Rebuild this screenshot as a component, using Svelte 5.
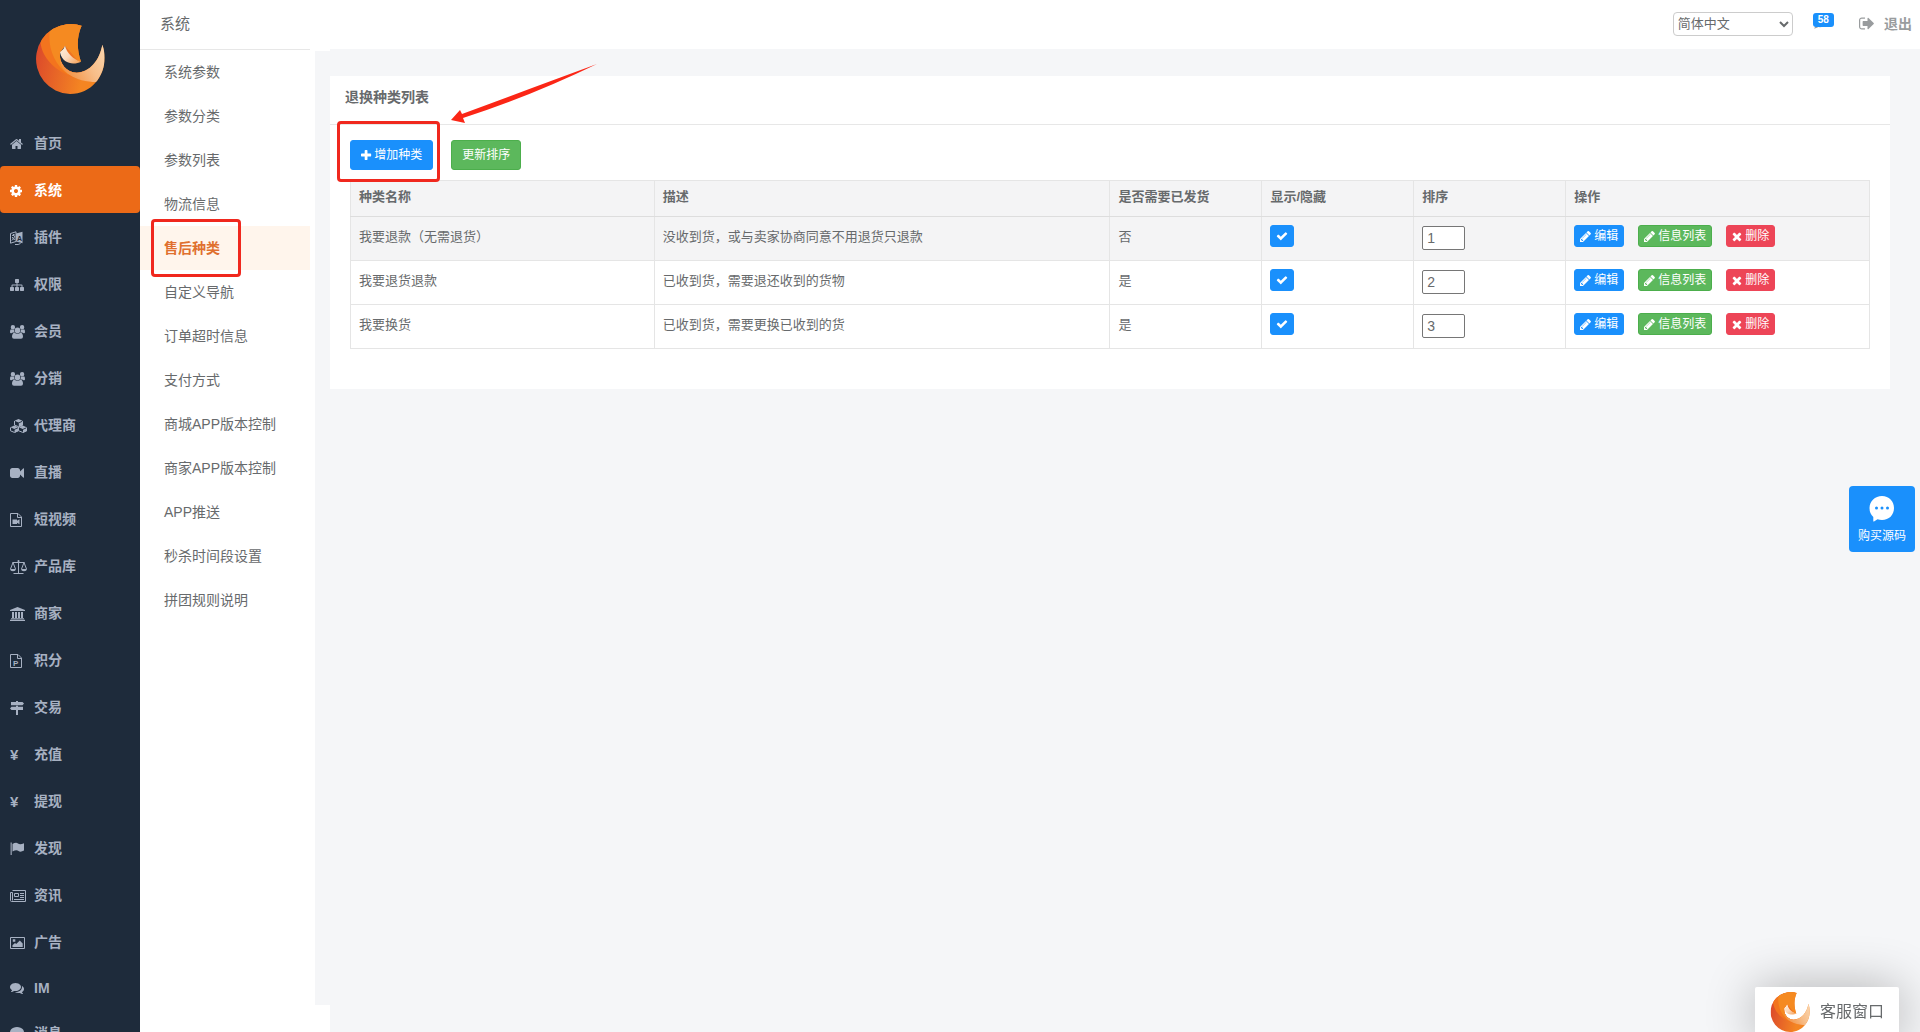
<script lang="ts">
	type Icon = { vb: string; d?: string; line?: string; text?: string; tx?: number; ty?: number; ts?: number; knock?: boolean };

	const comment =
		'M1408 768q0 139-94 257t-256.5 186.5-353.5 68.5q-86 0-176-16-124 88-278 128-36 9-86 16h-3q-11 0-20.5-8t-11.5-21q-1-3-1-6.5t.5-6.5 2-6l2.5-5 3.5-5.5 4-5 4.5-5 4-4.5q5-6 23-25t26-29.5 22.5-29 25-38.5 20.5-44q-124-72-195-177t-71-224q0-139 94-257t256.5-186.5 353.5-68.5 353.5 68.5 256.5 186.5 94 257z';
	const people =
		'M7.5 2.4a2.9 2.9 0 1 1 0 5.8a2.9 2.9 0 0 1 0-5.8zM2.9 0a2.200 2.200 0 1 1 0 4.400a2.200 2.200 0 0 1 0-4.400zM12.1 0a2.200 2.200 0 1 1 0 4.400a2.200 2.200 0 0 1 0-4.400zM1 4.2q1.8 1.1 3 .3q-.4 1.7.8 3h-1.700q-1 0-1.600.8H1Q0 8.200 0 7q0-2.800 1-2.800zM14 4.200q-1.800 1.100-3 .3q.4 1.700-.8 3h1.700q1 0 1.600.8h.5Q15 8.200 15 7q0-2.800-1-2.800zM4.500 7.700q3 1.900 6 0q2.500.3 2.500 4.100q0 2-2 2H4q-2 0-2-2q0-3.800 2.500-4.100z';

	const icons: Record<string, Icon> = {
		home: {
			vb: '64 0 1664 1792',
			d: 'M1472 992v480q0 26-19 45t-45 19h-384v-384h-256v384h-384q-26 0-45-19t-19-45v-480q0-1 .5-3t.5-3l575-474 575 474q1 2 1 6zm223-69l-62 74q-8 9-21 11h-3q-13 0-21-7l-692-577-692 577q-12 8-24 7-13-2-21-11l-62-74q-8-10-7-23.5t11-21.5l719-599q32-26 76-26t76 26l244 204v-195q0-14 9-23t23-9h192q14 0 23 9t9 23v408l219 182q10 8 11 21.5t-7 23.5z'
		},
		cog: {
			vb: '128 0 1536 1792',
			d: 'M1152 896q0-106-75-181t-181-75-181 75-75 181 75 181 181 75 181-75 75-181zm512-109v222q0 12-8 23t-20 13l-185 28q-19 54-39 91 35 50 107 138 10 12 10 25t-9 23q-27 37-99 108t-94 71q-12 0-26-9l-138-108q-44 23-91 38-16 136-29 186-7 28-36 28h-222q-14 0-24.5-8.5t-11.5-21.5l-28-184q-49-16-90-37l-141 107q-10 9-25 9-14 0-25-11-126-114-165-168-7-10-7-23 0-12 8-23 15-21 51-66.5t54-70.5q-27-50-41-99l-183-27q-13-2-21-12.5t-8-23.5v-222q0-12 8-23t19-13l186-28q14-46 39-92-40-57-107-138-10-12-10-24 0-10 9-23 26-36 98.5-107.5t94.5-71.5q13 0 26 10l138 107q44-23 91-38 16-136 29-186 7-28 36-28h222q14 0 24.5 8.5t11.5 21.5l28 184q49 16 90 37l142-107q9-9 24-9 13 0 25 10 129 119 165 170 7 8 7 22 0 12-8 23-15 21-51 66.5t-54 70.5q26 50 41 98l183 28q13 2 21 12.5t8 23.5z'
		},
		language: {
			vb: '0 0 13 14',
			d: 'M6 2.500L12.500 .8V12.200L6 10.500z',
			line: 'M.5 2.500L6 .8V10.500L.5 12.200zM2 4.500L5 3.800M3.500 3V5M4.800 5Q4 8 1.800 9.500M2.200 6Q3 8.500 5 8.500M5 13.500Q8.500 14 10.500 12.500',
			text: 'A',
			tx: 7,
			ty: 9.5,
			ts: 7,
			knock: true
		},
		sitemap: {
			vb: '0 0 1792 1792',
			d: 'M1792 1248v320q0 40-28 68t-68 28h-320q-40 0-68-28t-28-68v-320q0-40 28-68t68-28h96v-192h-512v192h96q40 0 68 28t28 68v320q0 40-28 68t-68 28h-320q-40 0-68-28t-28-68v-320q0-40 28-68t68-28h96v-192h-512v192h96q40 0 68 28t28 68v320q0 40-28 68t-68 28h-320q-40 0-68-28t-28-68v-320q0-40 28-68t68-28h96v-192q0-52 38-90t90-38h512v-192h-96q-40 0-68-28t-28-68v-320q0-40 28-68t68-28h320q40 0 68 28t28 68v320q0 40-28 68t-68 28h-96v192h512q52 0 90 38t38 90v192h96q40 0 68 28t28 68z'
		},
		users: { vb: '0 0 15 14', d: people },
		cubes: {
			vb: '0 0 17 14',
			d: 'M4.500 1.700L8.500 3.400 12.500 1.700 8.500 .1zM.4 8.300L4.300 10 8.200 8.300 4.300 6.600zM8.800 8.300L12.700 10 16.600 8.300 12.700 6.600zM8.800 4.200L13 2.400V6L8.800 7.900zM4.600 10.800L8.400 9V12L4.600 13.900zM13 10.800L17 9V12L13 13.900z',
			line: 'M4.500 2V6L8.500 7.700 12.500 6V2.200M.5 8.500V11.800L4.300 13.400 8.500 11.700V8M8.500 11.700L12.700 13.400 16.500 11.800V8.500'
		},
		video: {
			vb: '0 0 1792 1792',
			d: 'M1792 352v1088q0 42-39 59-13 5-25 5-27 0-45-19l-403-403v166q0 119-84.5 203.500t-203.500 84.500h-704q-119 0-203.500-84.500t-84.500-203.500v-704q0-119 84.500-203.500t203.500-84.500h704q119 0 203.500 84.500t84.500 203.500v165l403-402q18-19 45-19 12 0 25 5 39 17 39 59z'
		},
		fileVideo: { vb: '0 0 12 14', d: 'M2.500 6.500h4.500v1.200L9.500 6.200v5L7 9.700V11H2.500z', line: 'M.5 .5H8L11.500 4V13.500H.5zM7.500 .5V4.500H11.500' },
		balance: {
			vb: '0 0 17 14',
			d: 'M0 9h6q-.3 2.300-3 2.300T0 9zM11 9h6q-.3 2.300-3 2.300T11 9zM7.500 .9a1 1 0 0 1 2 0v.9h-2z',
			line: 'M2.500 2.500H14.500M8.500 1V13M3.500 13.500H13.500M3 2.500L.5 9M3 2.500L5.500 9M14 2.500L11.500 9M14 2.500L16.500 9'
		},
		bank: { vb: '0 0 15 14', d: 'M7.500 0L15 3v1H0V3zM2 5h2v6H2zM5 5h2v6H5zM8 5h2v6H8zM11 5h2v6h-2zM1 11.300h13v1H1zM0 12.800h15V14H0z' },
		filePoint: { vb: '0 0 12 14', line: 'M.5 .5H8L11.500 4V13.500H.5zM7.500 .5V4.500H11.500', text: 'P', tx: 3, ty: 11.5, ts: 8 },
		signs: { vb: '0 0 14 14', d: 'M6 0h2v1h4.500L14 2.500 12.500 4.200H1V1h5zM6 4.800h2v1h5v3.300H8V14H6V9.100H1.500L0 7.500 1.500 5.800H6z' },
		yen: { vb: '0 0 9 14', text: '¥', tx: 0, ty: 12, ts: 15 },
		flag: { vb: '0 0 14 14', d: 'M.6 .4h1.100V13H.6zM2.500 2Q6 0 8 1.500T14 1.200V8.500Q10.500 10.500 8.500 9T2.500 9.500z' },
		news: { vb: '0 0 16 14', line: 'M2.500 1.500H15.500V12.500H1.500Q.5 12.500 .5 11.500V3.500H2.500V11.500M4.500 4.500H8.500V7.500H4.500zM10 4.500H14M10 6.500H14M10 8.500H14M4 10.500H14' },
		image: { vb: '0 0 15 14', d: 'M2.800 3.200h2.500v2.500H2.800zM2.500 11V9.200L5 7l1.200 1.100L9.800 4.500 12.700 7.500V11z', line: 'M.5 1.500H14.500V12.500H.5z' },
		comments: {
			vb: '0 0 1792 1792',
			d:
				comment +
				'm384 256q0 120-71 224.500t-195 176.500q10 24 20.500 44t25 38.500 22.500 29 26 29.500 23 25q1 1 4 4.500t4.500 5 4 5 3.500 5.500l2.500 5 2 6 .5 6.500-1 6.500q-3 14-13 22t-22 7q-50-7-86-16-154-40-278-128-90 16-176 16-271 0-472-132 58 4 88 4 161 0 309-45t264-129q125-92 192-212t67-254q0-77-23-152 129 71 204 178t75 230z'
		},
		comment: { vb: '0 256 1408 1408', d: comment },
		plus: {
			vb: '192 0 1408 1664',
			d: 'M1600 736v192q0 40-28 68t-68 28h-416v416q0 40-28 68t-68 28h-192q-40 0-68-28t-28-68v-416h-416q-40 0-68-28t-28-68v-192q0-40 28-68t68-28h416v-416q0-40 28-68t68-28h192q40 0 68 28t28 68v416h416q40 0 68 28t28 68z'
		},
		check: {
			vb: '0 0 1792 1792',
			d: 'M1671 566q0 40-28 68l-724 724-136 136q-28 28-68 28t-68-28l-136-136-362-362q-28-28-28-68t28-68l136-136q28-28 68-28t68 28l294 295 656-657q28-28 68-28t68 28l136 136q28 28 28 68z'
		},
		pencil: {
			vb: '128 0 1536 1664',
			d: 'M491 1536l91-91-235-235-91 91v107h128v128h107zm523-928q0-22-22-22-10 0-17 7l-542 542q-7 7-7 17 0 22 22 22 10 0 17-7l542-542q7-7 7-17zm-54-192l416 416-832 832h-416v-416zm683 96q0 53-37 90l-166 166-416-416 166-165q36-38 90-38 53 0 91 38l235 234q37 39 37 91z'
		},
		times: {
			vb: '210 0 1372 1664',
			d: 'M1490 1322q0 40-28 68l-136 136q-28 28-68 28t-68-28l-294-294-294 294q-28 28-68 28t-68-28l-136-136q-28-28-28-68t28-68l294-294-294-294q-28-28-28-68t28-68l136-136q28-28 68-28t68 28l294 294 294-294q28-28 68-28t68 28l136 136q28 28 28 68t-28 68l-294 294 294 294q28 28 28 68z'
		},
		signOut: {
			vb: '64 0 1600 1792',
			d: 'M704 1440q0 4 1 20t.5 26.500-3 23.500-10 19.500-20.500 6.500h-320q-119 0-203.500-84.500t-84.500-203.500v-704q0-119 84.500-203.500t203.500-84.500h320q13 0 22.500 9.500t9.500 22.500q0 4 1 20t.5 26.500-3 23.500-10 19.500-20.500 6.500h-320q-66 0-113 47t-47 113v704q0 66 47 113t113 47h312l11.500 1 11.500 3 8 5.500 7 9 2 13.500zm928-544q0 26-19 45l-544 544q-19 19-45 19t-45-19-19-45v-288h-448q-26 0-45-19t-19-45v-384q0-26 19-45t45-19h448v-288q0-26 19-45t45-19 45 19l544 544q19 19 19 45z'
		}
	};

	const menu = [
		{ label: '首页', icon: 'home' },
		{ label: '系统', icon: 'cog' },
		{ label: '插件', icon: 'language' },
		{ label: '权限', icon: 'sitemap' },
		{ label: '会员', icon: 'users' },
		{ label: '分销', icon: 'users' },
		{ label: '代理商', icon: 'cubes' },
		{ label: '直播', icon: 'video' },
		{ label: '短视频', icon: 'fileVideo' },
		{ label: '产品库', icon: 'balance' },
		{ label: '商家', icon: 'bank' },
		{ label: '积分', icon: 'filePoint' },
		{ label: '交易', icon: 'signs' },
		{ label: '充值', icon: 'yen' },
		{ label: '提现', icon: 'yen' },
		{ label: '发现', icon: 'flag' },
		{ label: '资讯', icon: 'news' },
		{ label: '广告', icon: 'image' },
		{ label: 'IM', icon: 'comments' },
		{ label: '消息', icon: 'comment' }
	];

	const submenu = [
		'系统参数',
		'参数分类',
		'参数列表',
		'物流信息',
		'售后种类',
		'自定义导航',
		'订单超时信息',
		'支付方式',
		'商城APP版本控制',
		'商家APP版本控制',
		'APP推送',
		'秒杀时间段设置',
		'拼团规则说明'
	];

	let active = $state('系统');
	let current = $state('售后种类');

	let rows = $state([
		{ name: '我要退款（无需退货）', desc: '没收到货，或与卖家协商同意不用退货只退款', shipped: '否', shown: true, sort: '1' },
		{ name: '我要退货退款', desc: '已收到货，需要退还收到的货物', shipped: '是', shown: true, sort: '2' },
		{ name: '我要换货', desc: '已收到货，需要更换已收到的货', shipped: '是', shown: true, sort: '3' }
	]);

	function sortRows() {
		rows.sort((a, b) => Number(a.sort) - Number(b.sort));
	}
</script>

{#snippet glyph(name: string)}
	{@const i = icons[name]}
	<svg class="icon" viewBox={i.vb} aria-hidden="true">
		{#if i.d}<path d={i.d} fill="currentColor" />{/if}
		{#if i.line}<path d={i.line} fill="none" stroke="currentColor" />{/if}
		{#if i.text}
			<text x={i.tx} y={i.ty} font-size={i.ts} class:knock={i.knock}>{i.text}</text>
		{/if}
	</svg>
{/snippet}

{#snippet logo(id: string)}
	<svg class="logo" viewBox="105 72 210 210" aria-hidden="true">
		<defs>
			<linearGradient id="{id}-base" x1="0" y1="0.5" x2="1" y2="0.7">
				<stop offset="0" stop-color="#dc4a2b" />
				<stop offset="0.7" stop-color="#f48522" />
			</linearGradient>
			<linearGradient id="{id}-tail" x1="0" y1="0.8" x2="1" y2="0.3">
				<stop offset="0" stop-color="#f28a37" />
				<stop offset="0.5" stop-color="#f7bd88" />
				<stop offset="1" stop-color="#fbdcb8" />
			</linearGradient>
			<linearGradient id="{id}-beak" x1="0" y1="0" x2="1" y2="1">
				<stop offset="0" stop-color="#fff1de" />
				<stop offset="0.5" stop-color="#fbd9bd" />
				<stop offset="1" stop-color="#f49a4c" />
			</linearGradient>
			<clipPath id="{id}-clip">
				<path
					d="M245 77C230 108 230 150 243 185L208 175L195 137L180 157C176 186 196 218 230 218C270 216 299 180 307 134C331 200 290 282 210 282A105 105 0 1 1 245 77z"
				/>
			</clipPath>
		</defs>
		<g clip-path="url(#{id}-clip)">
			<rect x="105" y="72" width="210" height="210" fill="url(#{id}-base)" />
			<path d="M121 120C122 180 185 240 290 246L250 210L195 140L245 60H140z" fill="#f3741e" />
			<path d="M150 85C142 140 160 190 205 224L195 138L250 200V60H150z" fill="#f58a21" />
			<path d="M180 180C180 215 225 246 290 246L340 200L310 110L250 190L200 205z" fill="url(#{id}-tail)" />
		</g>
		<path d="M195 137C201 160 220 178 243 185C226 194 188 196 180 157Q192 148 195 137z" fill="url(#{id}-beak)" />
	</svg>
{/snippet}

<div class="page">
	<nav class="sidebar" aria-label="主菜单">
		<a class="brand" href="#/" aria-label="首页">{@render logo('brand')}</a>
		{#each menu as item}
			<a
				class="menu-item"
				class:active={item.label === active}
				class:latin={item.label === 'IM'}
				href="#/{item.label}"
				onclick={() => (active = item.label)}
			>
				<span class="menu-icon">{@render glyph(item.icon)}</span>
				{item.label}
			</a>
		{/each}
	</nav>

	<div class="main">
		<header>
			<h1>系统</h1>
			<select aria-label="语言">
				<option>简体中文</option>
				<option>English</option>
			</select>
			<a class="messages" href="#/messages" aria-label="58 条消息">
				{@render glyph('comment')}
				<span class="badge">58</span>
			</a>
			<a class="logout" href="#/logout">{@render glyph('signOut')}退出</a>
		</header>

		<div class="body">
			<aside>
				<nav class="submenu" aria-label="系统">
					{#each submenu as label}
						<a class:current={label === current} href="#/system/{label}" onclick={() => (current = label)}>
							{label}
							{#if label === current}<span class="mark"></span>{/if}
						</a>
					{/each}
				</nav>
				<div class="gutter"></div>
			</aside>

			<main>
				<section class="card">
					<h2>退换种类列表</h2>
					<div class="card-body">
						<div class="toolbar">
							<div class="marked">
								<button class="btn blue">{@render glyph('plus')}增加种类</button>
								<span class="mark"></span>
								<svg class="arrow" viewBox="0 0 146 60" aria-hidden="true">
									<path d="M0 56L9 46L11 50Q70 28 146 0Q80 32 12 54L14 59z" fill="#fb2616" />
								</svg>
							</div>
							<button class="btn green" onclick={sortRows}>更新排序</button>
						</div>

						<table>
							<thead>
								<tr>
									<th class="w20">种类名称</th>
									<th class="w30">描述</th>
									<th class="w10">是否需要已发货</th>
									<th class="w10">显示/隐藏</th>
									<th class="w10">排序</th>
									<th class="w20">操作</th>
								</tr>
							</thead>
							<tbody>
								{#each rows as row}
									<tr>
										<td>{row.name}</td>
										<td>{row.desc}</td>
										<td>{row.shipped}</td>
										<td>
											<button
												class="btn small blue toggle"
												aria-label="显示/隐藏"
												aria-pressed={row.shown}
												onclick={() => (row.shown = !row.shown)}
											>
												{@render glyph(row.shown ? 'check' : 'times')}
											</button>
										</td>
										<td><input type="text" aria-label="排序" bind:value={row.sort} /></td>
										<td>
											<div class="actions">
												<button class="btn small blue">{@render glyph('pencil')}编辑</button>
												<button class="btn small green">{@render glyph('pencil')}信息列表</button>
												<button class="btn small red">{@render glyph('times')}删除</button>
											</div>
										</td>
									</tr>
								{/each}
							</tbody>
						</table>
					</div>
				</section>
			</main>
		</div>
	</div>

	<button class="buy">
		<svg viewBox="0 0 26 26" aria-hidden="true">
			<path d="M13 0C20 0 25 5 25 12S20 24 13 24Q10.500 24 8.500 23.300L5 25.500Q4.300 25.800 4.300 25V21Q.5 17.500 .5 12C.5 5 6 0 13 0z" fill="#fff" />
			<g fill="#1a90fc">
				<circle cx="7.500" cy="12" r="1.500" />
				<circle cx="13" cy="12" r="1.500" />
				<circle cx="18.500" cy="12" r="1.500" />
			</g>
		</svg>
		购买源码
	</button>

	<button class="chat">{@render logo('chat')}客服窗口</button>
</div>

<style>
	:global(body) {
		background: #fff;
	}

	.page {
		display: flex;
		height: 100vh;
		overflow: hidden;
		color: #676a6c;
		font-family: 'Liberation Sans', 'Noto Sans CJK SC', sans-serif;
		font-size: 13px;
	}

	a {
		color: inherit;
		text-decoration: none;
	}

	button,
	input,
	select {
		box-sizing: border-box;
		color: inherit;
		font-family: inherit;
	}

	.icon {
		display: block;
		height: 14px;
		overflow: visible;
	}

	.icon text {
		fill: currentColor;
		font-weight: bold;
	}

	.icon text.knock {
		fill: #1e2b3b;
	}

	.logo {
		display: block;
	}

	.sidebar {
		flex: 0 0 140px;
		overflow: hidden;
		background: #1e2b3b;
		color: #a7b1c2;
		font-size: 14px;
		font-weight: bold;
	}

	.brand {
		display: block;
		padding: 24px 35px 25px;
	}

	.menu-item {
		display: flex;
		align-items: center;
		padding: 15px 10px 13px;
		border-radius: 4px;
		line-height: 19px;
	}

	.menu-item.latin {
		line-height: 16px;
	}

	.menu-item.active {
		background: #ec6a17;
		color: #fff;
	}

	.menu-icon {
		flex: 0 0 24px;
	}

	.main {
		display: flex;
		flex: 1;
		flex-direction: column;
		min-width: 0;
	}

	header {
		box-sizing: border-box;
		display: flex;
		align-items: center;
		height: 49px;
		padding: 0 8px 2px 20px;
	}

	h1 {
		flex: 1;
		margin: 0;
		font-size: 15px;
		font-weight: normal;
		line-height: 20px;
	}

	select {
		width: 120px;
		height: 24px;
		border: 1px solid #ccc;
		border-radius: 4px;
		background: #fff;
		font-size: 13px;
	}

	.messages {
		position: relative;
		width: 21px;
		margin: 0 25px 0 20px;
		color: #999c9e;
	}

	.messages .icon {
		height: 14px;
	}

	.badge {
		position: absolute;
		top: -4px;
		left: 0;
		width: 21px;
		border-radius: 3px;
		background: #1a90fc;
		color: #fff;
		font-size: 10px;
		font-weight: bold;
		line-height: 14px;
		text-align: center;
	}

	.logout {
		display: flex;
		align-items: center;
		gap: 10px;
		color: #999c9e;
		font-size: 14px;
		font-weight: bold;
		line-height: 20px;
	}

	.logout .icon {
		height: 17px;
	}

	.body {
		display: flex;
		flex: 1;
	}

	aside {
		display: flex;
		flex: 0 0 190px;
	}

	.submenu {
		width: 170px;
		border-top: 1px solid #e7e7e7;
	}

	.submenu a {
		display: block;
		position: relative;
		padding-left: 24px;
		font-size: 14px;
		line-height: 44px;
	}

	.submenu a.current {
		background: #fff5ec;
		color: #e0702f;
		font-weight: bold;
	}

	.mark {
		position: absolute;
		border: 3px solid #f0281e;
		border-radius: 4px;
		pointer-events: none;
	}

	.submenu .mark {
		inset: -7px 69px -7px 11px;
	}

	.gutter {
		width: 15px;
		margin: 2px 0 27px 5px;
		background: #f5f6f8;
	}

	main {
		flex: 1;
		min-width: 0;
		padding: 27px 30px 0 0;
		background: #f5f6f8;
	}

	.card {
		background: #fff;
	}

	h2 {
		margin: 0;
		padding: 0 15px 6px;
		border-bottom: 1px solid #e7e7e7;
		font-size: 14px;
		line-height: 42px;
	}

	.card-body {
		padding: 15px 20px 40px;
	}

	.toolbar {
		display: flex;
		gap: 18px;
		margin-bottom: 10px;
	}

	.marked {
		position: relative;
	}

	.marked .mark {
		inset: -19px -7px -12px -13px;
	}

	.arrow {
		position: absolute;
		top: -76px;
		left: 101px;
		width: 146px;
		height: 60px;
	}

	.btn {
		display: flex;
		align-items: center;
		justify-content: center;
		gap: 3px;
		height: 30px;
		padding: 0 10px;
		border: 1px solid;
		border-radius: 3px;
		color: #fff;
		font-size: 12px;
		line-height: 18px;
		white-space: nowrap;
		cursor: pointer;
	}

	.btn .icon {
		height: 12px;
	}

	.btn.small {
		height: 22px;
		padding: 0 5px;
	}

	.blue {
		border-color: #1a90fc;
		background: #1a90fc;
	}

	.green {
		border-color: #4cae4c;
		background: #5cb85c;
	}

	.red {
		border-color: #ed4557;
		background: #ed4557;
	}

	.btn.toggle {
		width: 24px;
	}

	table {
		width: 100%;
		border-collapse: collapse;
		table-layout: fixed;
	}

	th,
	td {
		box-sizing: border-box;
		padding: 8px;
		border: 1px solid #e5e5e5;
		text-align: left;
		vertical-align: top;
	}

	th {
		height: 36px;
		padding: 7px 8px;
		border-bottom-color: #ddd;
		background: #f4f4f5;
		line-height: 18px;
	}

	td {
		height: 44px;
		line-height: 24px;
	}

	tbody tr:first-child {
		background: #f4f4f5;
	}

	.w10 {
		width: 10%;
	}

	.w20 {
		width: 20%;
	}

	.w30 {
		width: 30%;
	}

	input {
		display: block;
		width: 43px;
		height: 24px;
		margin-top: 1px;
		padding: 0 4px;
		border: 1px solid #767676;
		border-radius: 2px;
		background: #fff;
		font-size: 14px;
	}

	.actions {
		display: flex;
		gap: 14px;
	}

	.buy {
		display: flex;
		position: fixed;
		top: 486px;
		right: 5px;
		flex-direction: column;
		align-items: center;
		gap: 5px;
		width: 66px;
		height: 66px;
		padding: 10px 0 0;
		border: none;
		border-radius: 4px;
		background: #1a90fc;
		color: #fff;
		font-size: 12px;
		line-height: 18px;
	}

	.buy svg {
		width: 26px;
		height: 26px;
	}

	.chat {
		display: flex;
		position: fixed;
		right: 21px;
		bottom: -5px;
		align-items: center;
		gap: 10px;
		height: 50px;
		padding: 0 15px;
		border: none;
		border-radius: 2px;
		background: #fff;
		box-shadow: 1px 1px 50px rgba(0, 0, 0, 0.3);
		font-size: 16px;
		line-height: 20px;
	}

	.chat .logo {
		width: 40px;
		height: 40px;
	}
</style>
